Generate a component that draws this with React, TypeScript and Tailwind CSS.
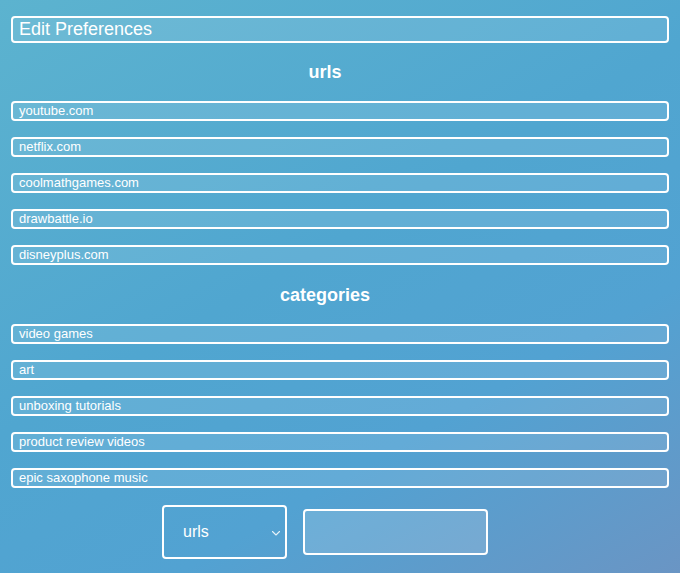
import React from "react";

const urls = ["youtube.com", "netflix.com", "coolmathgames.com", "drawbattle.io", "disneyplus.com"];
const cats = ["video games", "art", "unboxing tutorials", "product review videos", "epic saxophone music"];

function Item({ text }: { text: string }) {
  return (
    <div className="h-[20px] rounded-[4px] border-2 border-white bg-white/10 pl-[6px] text-[13px] leading-[16px] text-white">
      {text}
    </div>
  );
}

export default function App() {
  return (
    <div
      className="min-h-[573px] w-full bg-[linear-gradient(150deg,#5cb3cf_0%,#50a6d0_45%,#52a2d2_70%,#6a95c4_100%)] px-[11px] pt-[16px] text-white"
      style={{ fontFamily: '"Liberation Sans", Arial, sans-serif' }}
    >
      <div className="flex h-[27px] items-center rounded-[4px] border-2 border-white bg-white/10 pl-[6px] text-[18px] text-white">
        Edit Preferences
      </div>
      <h2 className="mt-[18px] mb-[18px] pr-[30px] text-center text-[18px] leading-[22px] font-bold">urls</h2>
      <div className="flex flex-col gap-[16px]">
        {urls.map((u) => (
          <Item key={u} text={u} />
        ))}
      </div>
      <h2 className="mt-[19px] mb-[18px] pr-[30px] text-center text-[18px] leading-[22px] font-bold">categories</h2>
      <div className="flex flex-col gap-[16px]">
        {cats.map((u) => (
          <Item key={u} text={u} />
        ))}
      </div>
      <div className="mt-[17px] flex items-center gap-[16px] pl-[151px]">
        <div className="relative flex h-[54px] w-[125px] items-center rounded-[4px] border-2 border-white pl-[19px] text-[16px]">
          urls
          <svg className="absolute right-[4px] top-[23px]" width="10" height="7" viewBox="0 0 10 7" fill="none">
            <path d="M1.5 1.5 L5 5 L8.5 1.5" stroke="white" strokeOpacity="0.85" strokeWidth="1.1" strokeLinecap="round" strokeLinejoin="round" />
          </svg>
        </div>
        <div className="h-[46px] w-[185px] rounded-[4px] border-2 border-white bg-white/15" />
      </div>
    </div>
  );
}
